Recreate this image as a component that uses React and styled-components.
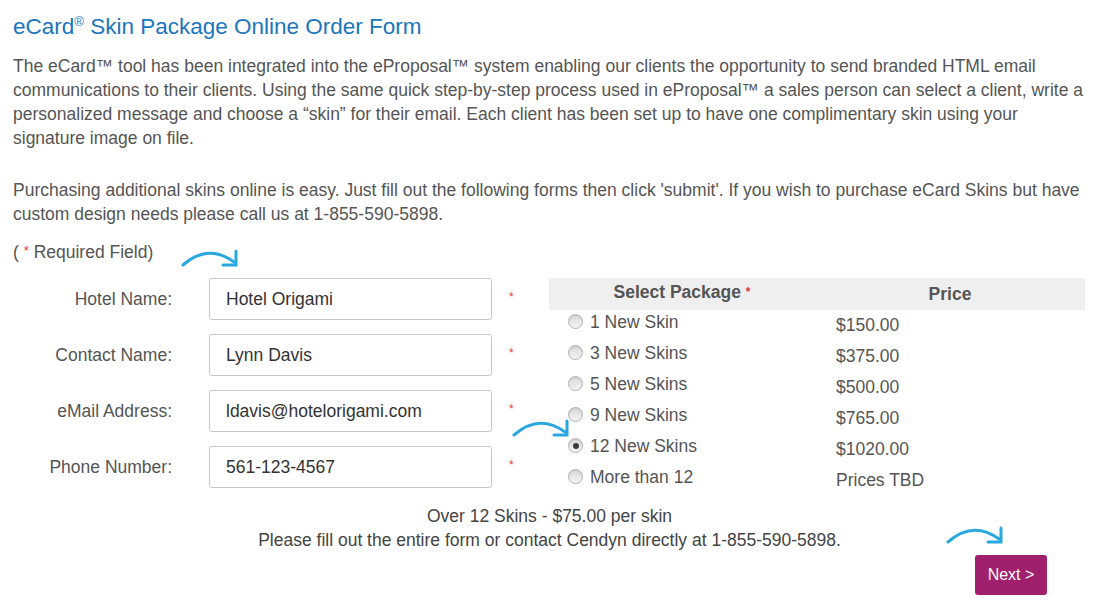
import React from "react";
import styled, { createGlobalStyle, css } from "styled-components";

const Global = createGlobalStyle`
  html, body { margin: 0; padding: 0; background: #fff; }
  body { font-family: "Liberation Sans", Arial, sans-serif; color: #555; }
`;

const Page = styled.div`
  width: 1073px;
  padding: 0 13px;
  font-size: 17.5px;
  line-height: 24px;
`;

const Title = styled.h1`
  margin: 12px 0 0;
  font-size: 22.5px;
  line-height: 30px;
  font-weight: normal;
  color: #1b76bc;
  sup {
    font-size: 13px;
    line-height: 0;
    vertical-align: 8px;
  }
`;

const Para = styled.p`
  margin: ${(p) => p.$top}px 0 0;
  color: #555;
`;

const Required = styled.div`
  margin-top: 13px;
  color: #555;
`;

const Star = styled.span`
  color: #e0383e;
  font-size: ${(p) => p.$size || 13}px;
  vertical-align: ${(p) => p.$raise || 3}px;
`;

const Section = styled.div`
  display: flex;
  margin-top: 14px;
  position: relative;
`;

const FormCol = styled.div`
  width: 536px;
  display: flex;
  flex-direction: column;
  gap: 14px;
`;

const Row = styled.div`
  display: flex;
  align-items: center;
  position: relative;
`;

const Label = styled.label`
  width: 159px;
  margin-right: 37px;
  text-align: right;
  color: #555;
`;

const Input = styled.input`
  box-sizing: border-box;
  width: 283px;
  height: 42px;
  border: 1px solid #c8c8c8;
  border-radius: 3px;
  padding: 0 16px;
  font-family: "Liberation Sans", Arial, sans-serif;
  font-size: 17.5px;
  color: #333;
  background: #fff;
  outline: none;
`;

const FieldStar = styled.span`
  margin-left: 17px;
  color: #e0383e;
  font-size: 12px;
  line-height: 12px;
  align-self: center;
  transform: translateY(-2px);
`;

const Table = styled.div`
  width: 536px;
  display: grid;
  grid-template-columns: 266px 270px;
  align-content: start;
`;

const Head = styled.div`
  background: #efefef;
  height: 32px;
  display: flex;
  align-items: center;
  justify-content: center;
  font-weight: bold;
  color: #555;
  padding-bottom: ${(p) => p.$lift || 0}px;
  box-sizing: border-box;
`;

const OptionCell = styled.label`
  height: 31px;
  display: flex;
  align-items: flex-start;
  padding-left: 19px;
  color: #555;
  position: relative;
`;

const PriceCell = styled.div`
  height: 31px;
  padding: 3px 0 0 21px;
  box-sizing: border-box;
  color: #555;
`;

const Radio = styled.span`
  box-sizing: border-box;
  width: 15px;
  height: 15px;
  margin-top: 4px;
  margin-right: 7px;
  border-radius: 50%;
  border: 1px solid #b0b0b0;
  background: linear-gradient(#d8d8d8, #f4f4f4);
  box-shadow: inset 0 1px 1px rgba(0, 0, 0, 0.08);
  position: relative;
  flex: none;
  ${(p) =>
    p.$checked &&
    css`
      &::after {
        content: "";
        position: absolute;
        left: 3.5px;
        top: 3.5px;
        width: 6px;
        height: 6px;
        border-radius: 50%;
        background: #3c3c3c;
      }
    `}
`;

const Notes = styled.div`
  margin-top: 8px;
  text-align: center;
  color: #444;
`;

const ButtonRow = styled.div`
  display: flex;
  justify-content: flex-end;
  padding-right: 39px;
  margin-top: 3px;
`;

const NextButton = styled.button`
  position: relative;
  width: 72px;
  height: 40px;
  border: none;
  border-radius: 3px;
  background: #a1206d;
  color: #fff;
  font-family: "Liberation Sans", Arial, sans-serif;
  font-size: 16px;
  cursor: pointer;
`;

const ArrowWrap = styled.span`
  position: absolute;
  left: ${(p) => p.$x}px;
  top: ${(p) => p.$y}px;
  width: 58px;
  height: 20px;
  pointer-events: none;
  line-height: 0;
`;

const Arrow = ({ x, y }) => (
  <ArrowWrap $x={x} $y={y}>
    <svg width="58" height="20" viewBox="0 0 58 20" fill="none">
      <path
        d="M2 16 Q 27 -6 53 13"
        stroke="#29a8e0"
        strokeWidth="3"
        strokeLinecap="round"
        fill="none"
      />
      <path
        d="M55 2 V 16 H 42"
        stroke="#29a8e0"
        strokeWidth="3"
        strokeLinecap="round"
        strokeLinejoin="miter"
        fill="none"
      />
    </svg>
  </ArrowWrap>
);

const fields = [
  { label: "Hotel Name:", value: "Hotel Origami" },
  { label: "Contact Name:", value: "Lynn Davis" },
  { label: "eMail Address:", value: "ldavis@hotelorigami.com" },
  { label: "Phone Number:", value: "561-123-4567" },
];

const packages = [
  { name: "1 New Skin", price: "$150.00" },
  { name: "3 New Skins", price: "$375.00" },
  { name: "5 New Skins", price: "$500.00" },
  { name: "9 New Skins", price: "$765.00" },
  { name: "12 New Skins", price: "$1020.00", checked: true },
  { name: "More than 12", price: "Prices TBD" },
];

export default function App() {
  return (
    <Page>
      <Global />
      <Title>
        eCard<sup>®</sup> Skin Package Online Order Form
      </Title>
      <Para $top={12}>
        The eCard™ tool has been integrated into the eProposal™ system enabling our
        clients the opportunity to send branded HTML email communications to their
        clients. Using the same quick step-by-step process used in eProposal™ a sales
        person can select a client, write a personalized message and choose a “skin”
        for their email. Each client has been set up to have one complimentary skin
        using your signature image on file.
      </Para>
      <Para $top={28}>
        Purchasing additional skins online is easy. Just fill out the following forms
        then click 'submit'. If you wish to purchase eCard Skins but have custom design
        needs please call us at 1-855-590-5898.
      </Para>
      <Required>
        ( <Star>*</Star> Required Field)
      </Required>
      <Section>
        <Arrow x={168} y={-29} />
        <FormCol>
          {fields.map((f) => (
            <Row key={f.label}>
              <Label>{f.label}</Label>
              <Input defaultValue={f.value} />
              <FieldStar>*</FieldStar>
            </Row>
          ))}
        </FormCol>
        <Table>
          <Head $lift={4}>
            Select Package&nbsp;<Star $size={12} $raise={4}>*</Star>
          </Head>
          <Head>Price</Head>
          {packages.map((p) => (
            <React.Fragment key={p.name}>
              <OptionCell>
                {p.checked && <Arrow x={-37} y={-15} />}
                <Radio $checked={p.checked} />
                {p.name}
              </OptionCell>
              <PriceCell>{p.price}</PriceCell>
            </React.Fragment>
          ))}
        </Table>
      </Section>
      <Notes>
        Over 12 Skins - $75.00 per skin
        <br />
        Please fill out the entire form or contact Cendyn directly at 1-855-590-5898.
      </Notes>
      <ButtonRow>
        <NextButton>
          <Arrow x={-29} y={-29} />
          Next &gt;
        </NextButton>
      </ButtonRow>
    </Page>
  );
}
